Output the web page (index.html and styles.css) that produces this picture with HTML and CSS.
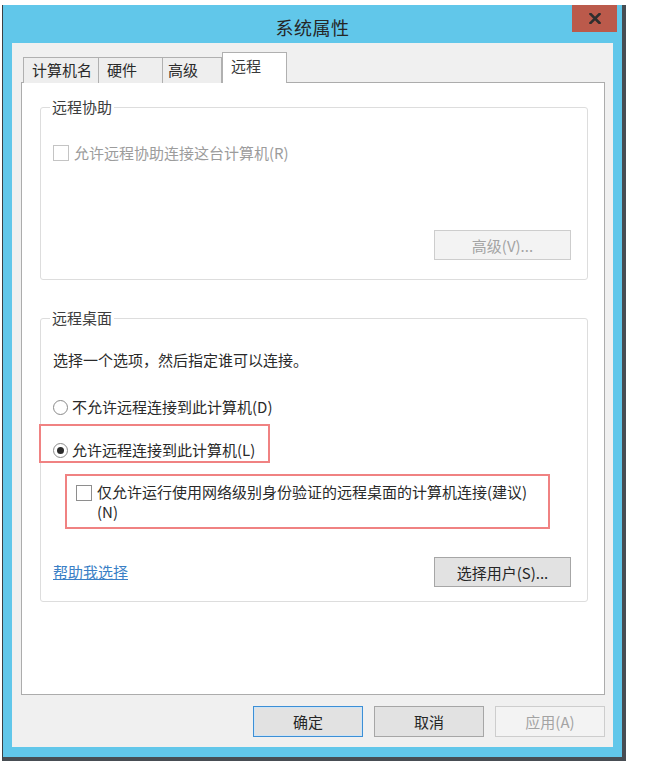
FILE: index.html
```html
<!DOCTYPE html>
<html lang="zh-CN">
<head>
<meta charset="utf-8">
<title>系统属性</title>
<link rel="stylesheet" href="styles.css">
</head>
<body>
<div class="window">
  <div class="titlebar">
    <span class="title">系统属性</span>
    <button class="close" aria-label="关闭">
      <svg width="12" height="11" viewBox="0 0 12 11"><path d="M1.5 1 L10.5 10 M10.5 1 L1.5 10" stroke="#2e2e2e" stroke-width="2.6" stroke-linecap="square"/></svg>
    </button>
  </div>
  <div class="client">
    <div class="tabs">
      <div class="tab tab-name">计算机名</div>
      <div class="tab tab-hw">硬件</div>
      <div class="tab tab-adv">高级</div>
      <div class="tab tab-remote active">远程</div>
    </div>
    <div class="panel">
      <fieldset class="group group-assist">
        <legend>远程协助</legend>
        <div class="option disabled"><span class="checkbox"></span><span>允许远程协助连接这台计算机(R)</span></div>
        <div class="group-actions actions-assist">
          <button class="btn btn-disabled btn-wide">高级(V)...</button>
        </div>
      </fieldset>
      <fieldset class="group group-desktop">
        <legend>远程桌面</legend>
        <p class="intro">选择一个选项，然后指定谁可以连接。</p>
        <div class="option radio-row"><span class="radio"></span><span>不允许远程连接到此计算机(D)</span></div>
        <div class="mark mark-allow">
          <div class="option"><span class="radio checked"></span><span>允许远程连接到此计算机(L)</span></div>
        </div>
        <div class="mark mark-nla">
          <div class="option option-multi"><span class="checkbox"></span><span>仅允许运行使用网络级别身份验证的远程桌面的计算机连接(建议)<br>(N)</span></div>
        </div>
        <div class="group-actions actions-desktop">
          <a class="help-link" href="#">帮助我选择</a>
          <button class="btn btn-wide">选择用户(S)...</button>
        </div>
      </fieldset>
    </div>
    <div class="footer">
      <button class="btn btn-default">确定</button>
      <button class="btn">取消</button>
      <button class="btn btn-disabled">应用(A)</button>
    </div>
  </div>
</div>
</body>
</html>
```

FILE: styles.css
```css
* { box-sizing: border-box; }

html, body {
  margin: 0;
  padding: 0;
  background: #ffffff;
}

body {
  font-family: "Noto Sans CJK SC", "Noto Sans", sans-serif;
  font-size: 15px;
  color: #2a2a2a;
}

.window {
  margin: 5px 0 0 2px;
  width: 624px;
  background: #61c7ea;
  border-left: 1px solid #3b3f43;
  border-right: 4px solid #474d53;
  border-bottom: 4px solid #474d53;
  padding: 0 9px 10px 9px;
  display: flex;
  flex-direction: column;
}

.titlebar {
  position: relative;
  height: 38px;
  display: flex;
  align-items: center;
  justify-content: center;
}

.title {
  font-size: 18px;
  line-height: 20px;
  color: #262626;
  padding-top: 6px;
  letter-spacing: 0.5px;
}

.close {
  position: absolute;
  top: 0;
  right: -4px;
  width: 45px;
  height: 27px;
  border: none;
  padding: 0;
  background: #bb5a4b;
  display: flex;
  align-items: center;
  justify-content: center;
}

.client {
  height: 704px;
  background: #f0f0f0;
  padding: 10px 8px 10px 9px;
  display: flex;
  flex-direction: column;
}

.tabs {
  display: flex;
  align-items: flex-end;
  height: 30px;
  margin-left: 2px;
  margin-bottom: -1px;
  position: relative;
  z-index: 1;
}

.tab {
  height: 26px;
  line-height: 24px;
  padding-left: 8px;
  background: #eeeeee;
  border: 1px solid #b0b0b0;
  border-bottom: none;
  color: #2a2a2a;
  white-space: nowrap;
}

.tab + .tab { border-left: none; }

.tab-name { width: 76px; }
.tab-hw { width: 64px; }
.tab-adv { width: 59px; padding-left: 5px; }
.tab-remote { width: 65px; }

.tab.active {
  height: 31px;
  line-height: 26px;
  background: #ffffff;
  border-left: 1px solid #b0b0b0;
  color: #3a3a3a;
}

.panel {
  flex: 1;
  background: #ffffff;
  border: 1px solid #acacac;
  padding: 14px 16px 0 18px;
  display: flex;
  flex-direction: column;
}

.group {
  margin: 0;
  border: 1px solid #dddddd;
  border-radius: 3px;
  padding: 0 16px 0 12px;
  min-width: 0;
}

.group legend {
  margin-left: -3px;
  padding: 0 2px;
  line-height: 20px;
  color: #3c3c3c;
}

.group-assist {
  height: 183px;
  padding-top: 26px;
}

.group-desktop {
  margin-top: 28px;
  padding-top: 22px;
  padding-bottom: 14px;
}

.option {
  display: flex;
  align-items: center;
  line-height: 20px;
  height: 20px;
}

.option.disabled { color: #9c9c9c; }

.checkbox {
  width: 16px;
  height: 16px;
  border: 1px solid #8e8e8e;
  background: #ffffff;
  margin-right: 5px;
  flex: none;
}

.option.disabled .checkbox { border-color: #c4c4c4; }

.radio {
  width: 15px;
  height: 15px;
  border: 1px solid #8a8a8a;
  border-radius: 50%;
  background: #ffffff;
  margin-right: 4px;
  flex: none;
  display: flex;
  align-items: center;
  justify-content: center;
}

.radio.checked::after {
  content: "";
  width: 7px;
  height: 7px;
  border-radius: 50%;
  background: #2b2b2b;
}

.intro {
  margin: 0;
  line-height: 20px;
}

.radio-row { margin-top: 27px; }

.mark {
  border: 2px solid #f08282;
}

.mark-allow {
  margin-top: 7px;
  margin-left: -14px;
  width: 231px;
  padding: 14px 0 1px 12px;
}

.mark-nla {
  margin-top: 11px;
  width: 485px;
  margin-left: 12px;
  padding: 6px 0 5px 9px;
}

.option-multi {
  height: auto;
  align-items: flex-start;
}

.option-multi .checkbox { margin-top: 3px; }

.group-actions {
  display: flex;
  align-items: center;
}

.actions-assist {
  justify-content: flex-end;
  margin-top: 67px;
}

.actions-desktop {
  justify-content: space-between;
  margin-top: 28px;
}

.help-link {
  color: #3a7fc6;
  text-decoration: underline;
  line-height: 20px;
}

.btn {
  font-family: inherit;
  font-size: 15px;
  color: #262626;
  width: 110px;
  height: 31px;
  padding: 0;
  background: #e2e2e2;
  border: 1px solid #a6a6a6;
}

.btn-wide {
  width: 137px;
  height: 30px;
}

.btn-default {
  border: 1px solid #3c8fd6;
  box-shadow: inset 0 0 0 1px #cfe4f5;
}

.btn-disabled {
  background: #f3f3f3;
  border: 1px solid #cdcdcd;
  color: #a3a3a3;
}

.footer {
  display: flex;
  justify-content: flex-end;
  gap: 11px;
  margin-top: 11px;
}
```
